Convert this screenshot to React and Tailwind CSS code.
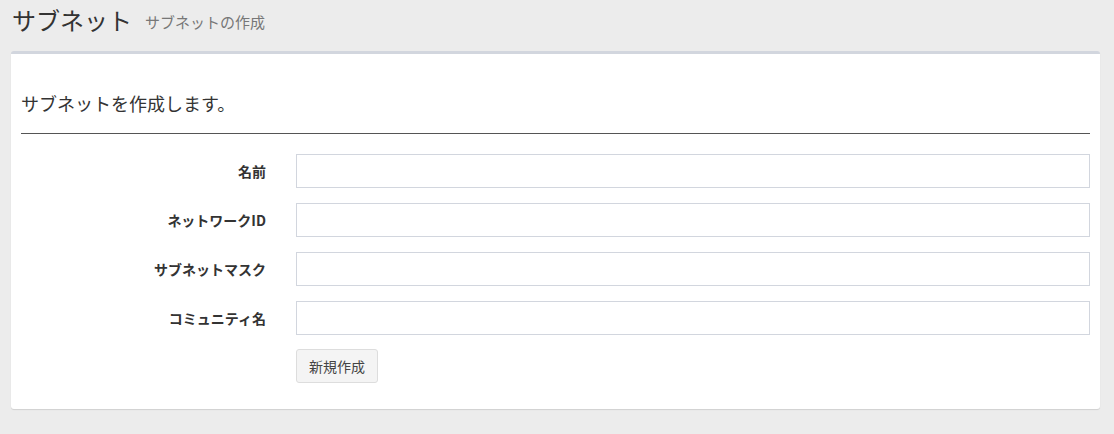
export default function App() {
  const fields = ['名前', 'ネットワークID', 'サブネットマスク', 'コミュニティ名'];
  const font = { fontFamily: '"Noto Sans CJK JP", "Noto Sans", sans-serif' };

  return (
    <div className="min-h-[434px] bg-[#ececec] pt-[6px] pb-[25px]" style={font}>
      <div className="flex items-end pl-[12px] h-[28px]">
        <h1 className="text-[24px] leading-[28px] text-[#333]">サブネット</h1>
        <span className="ml-[13px] mb-[1px] text-[15px] leading-[22px] text-[#777]">サブネットの作成</span>
      </div>

      <div className="mt-[17px] ml-[11px] mr-[14px] bg-white border-t-[3px] border-[#d2d6de] rounded-[3px] shadow-[0_1px_1px_rgba(0,0,0,0.12)] px-[10px] pb-[26px]">
        <p className="pt-[38px] text-[18px] leading-[22px] text-[#333]">サブネットを作成します。</p>
        <hr className="mt-[19px] border-0 border-t border-[#555]" />

        <div className="mt-[20px] flex flex-col gap-[15px]">
          {fields.map((f) => (
            <div key={f} className="flex items-center">
              <label className="w-[245px] text-right text-[14px] font-bold text-[#333]">{f}</label>
              <input
                type="text"
                className="ml-[30px] flex-1 h-[34px] border border-[#d2d6de] bg-white px-3 text-sm outline-none"
              />
            </div>
          ))}
          <div className="flex -mt-[1px]">
            <button className="ml-[275px] h-[34px] px-[12px] bg-[#f4f4f4] border border-[#ddd] rounded-[3px] text-[14px] text-[#444]">
              新規作成
            </button>
          </div>
        </div>
      </div>
    </div>
  );
}
